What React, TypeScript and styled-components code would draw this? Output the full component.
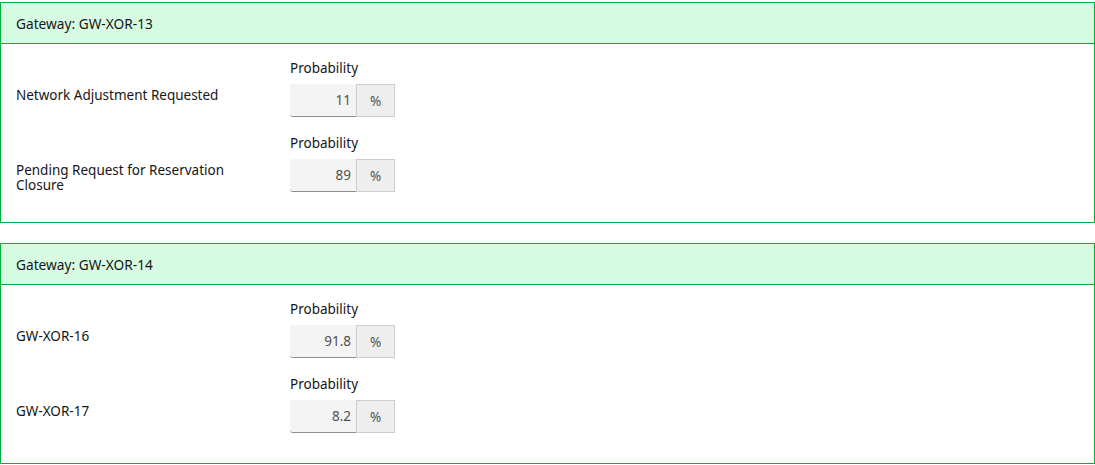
import React from "react";
import styled, { createGlobalStyle } from "styled-components";

const Global = createGlobalStyle`
  html, body { margin: 0; padding: 0; background: #fff; }
  body { font-family: "Noto Sans", "Liberation Sans", sans-serif; color: #161616; }
  * { box-sizing: border-box; }
`;

const Page = styled.div`
  padding-top: 2px;
  display: flex;
  flex-direction: column;
  gap: 20px;
`;

const Panel = styled.section`
  border: 1px solid #00b140;
  width: 1095px;
`;

const Header = styled.div`
  background: #d7fbe2;
  border-bottom: 1px solid #00b140;
  height: 41px;
  padding: 0 15px;
  display: flex;
  align-items: center;
  font-size: 13.7px;
`;

const Body = styled.div`
  padding: 16px 15px 30px;
  display: flex;
  flex-direction: column;
  gap: 18px;
`;

const Row = styled.div`
  display: flex;
  align-items: flex-end;
`;

const Label = styled.div`
  width: 274px;
  padding-right: 50px;
  padding-top: 4px;
  height: 33px;
  font-size: 13.5px;
  line-height: 15px;
  align-self: flex-end;
`;

const Field = styled.div`
  display: flex;
  flex-direction: column;
  gap: 8px;
`;

const FieldLabel = styled.div`
  font-size: 13.5px;
  line-height: 16px;
`;

const InputGroup = styled.div`
  display: flex;
  height: 33px;
`;

const Value = styled.div`
  width: 66px;
  background: #f4f4f4;
  border-bottom: 1px solid #8d8d8d;
  border-radius: 2px 0 0 3px;
  display: flex;
  align-items: center;
  justify-content: flex-end;
  padding-right: 5px;
  font-size: 13.5px;
  color: #525252;
`;

const Addon = styled.div`
  width: 39px;
  background: #eeeeee;
  border: 1px solid #cccccc;
  display: flex;
  align-items: center;
  justify-content: center;
  font-size: 13.5px;
  color: #525252;
`;

type Item = { name: string; value: string };
const gateways: { title: string; items: Item[] }[] = [
  {
    title: "Gateway: GW-XOR-13",
    items: [
      { name: "Network Adjustment Requested", value: "11" },
      { name: "Pending Request for Reservation Closure", value: "89" },
    ],
  },
  {
    title: "Gateway: GW-XOR-14",
    items: [
      { name: "GW-XOR-16", value: "91.8" },
      { name: "GW-XOR-17", value: "8.2" },
    ],
  },
];

export default function App() {
  return (
    <>
      <Global />
      <Page>
        {gateways.map((g) => (
          <Panel key={g.title}>
            <Header>{g.title}</Header>
            <Body>
              {g.items.map((it) => (
                <Row key={it.name}>
                  <Label>{it.name}</Label>
                  <Field>
                    <FieldLabel>Probability</FieldLabel>
                    <InputGroup>
                      <Value>{it.value}</Value>
                      <Addon>%</Addon>
                    </InputGroup>
                  </Field>
                </Row>
              ))}
            </Body>
          </Panel>
        ))}
      </Page>
    </>
  );
}
